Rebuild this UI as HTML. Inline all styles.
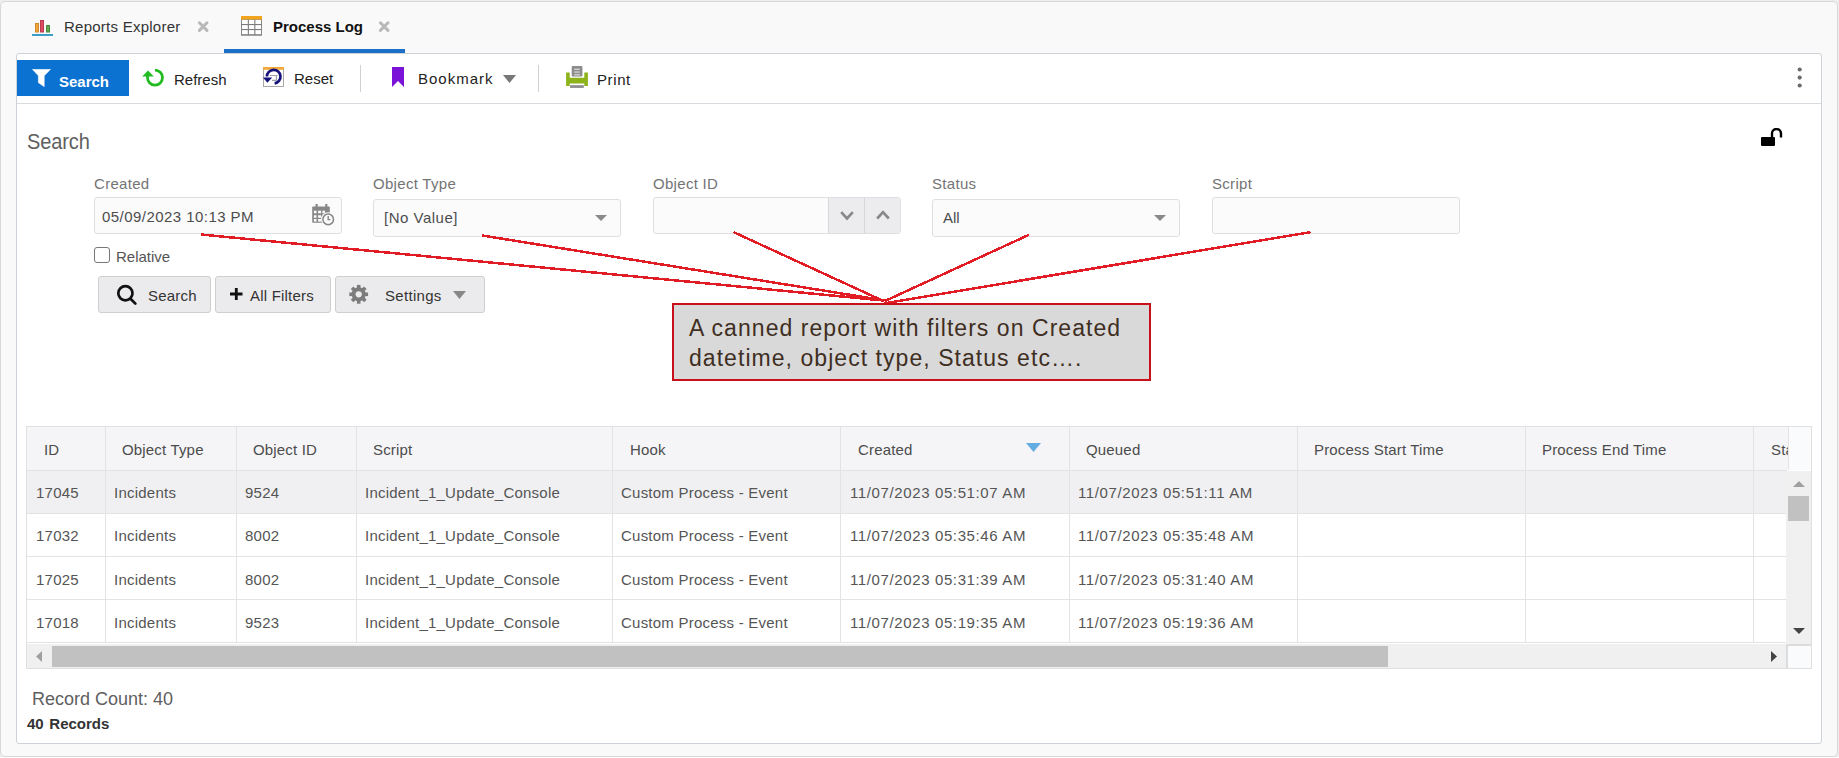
<!DOCTYPE html>
<html><head><meta charset="utf-8">
<style>
*{margin:0;padding:0;box-sizing:border-box}
html,body{width:1839px;height:758px;overflow:hidden;background:#eeeeee}
body{font-family:"Liberation Sans",sans-serif;position:relative;color:#333}
.a{position:absolute}
.t{position:absolute;white-space:nowrap;line-height:1}
#frame{left:0;top:1px;width:1838px;height:756px;border:1px solid #d8d8d8;border-radius:5px;background:#f9f9fa}
#panel{left:16px;top:53px;width:1806px;height:691px;border:1px solid #ccd2d8;border-radius:3px;background:#fff}
#tbline{left:17px;top:103px;width:1804px;height:1px;background:#d8dce0}
#tabline{left:224px;top:49px;width:181px;height:4px;background:#1a6fc6}
.sep{width:1px;background:#d0d0d0}
.lbl{color:#747474;font-size:15px;letter-spacing:0.3px}
.box{border:1px solid #dedfe2;border-radius:3px;background:#fbfbfc}
.btn{border:1px solid #cfcfcf;border-radius:3px;background:#ebebed}
.grid{background:#e3e3e3}
.cell{color:#555;font-size:15px;letter-spacing:0.23px}
.dt{letter-spacing:0.62px}
.hdr{color:#4c4c4c;font-size:15px;letter-spacing:0.17px}
</style></head>
<body>
<div class="a" id="frame"></div>
<div class="a" style="left:0;top:757px;width:1839px;height:1px;background:#fcfcfc"></div>

<!-- tabs -->
<svg class="a" style="left:32px;top:19px" width="22" height="18" viewBox="0 0 22 18">
  <rect x="3.5" y="4.5" width="3" height="8.5" fill="#f0a53a" stroke="#d08a2a" stroke-width="1"/>
  <rect x="8.5" y="1.5" width="3" height="11.5" fill="#e04a62" stroke="#b83a50" stroke-width="1"/>
  <rect x="14.5" y="6.5" width="3" height="6.5" fill="#62a852" stroke="#4a8a3c" stroke-width="1"/>
  <rect x="0" y="15" width="21" height="2" fill="#3d9fc8"/>
</svg>
<div class="t" style="left:64px;top:19px;font-size:15px;color:#333;letter-spacing:0.25px">Reports Explorer</div>
<svg class="a" style="left:196px;top:19px" width="15" height="15" viewBox="0 0 15 15"><path d="M3.4 3.8 L11 11.4 M11 3.8 L3.4 11.4" stroke="#b8b8b8" stroke-width="3" stroke-linecap="round"/></svg>

<svg class="a" style="left:241px;top:16px" width="22" height="20" viewBox="0 0 22 20">
  <rect x="0" y="0" width="21" height="19.7" fill="#7c7c7c"/>
  <rect x="0" y="0" width="21" height="3.6" fill="#f2a41e"/>
  <rect x="0.9" y="3.9" width="5.9" height="4.1" fill="#fff"/><rect x="0.9" y="9.1" width="5.9" height="3.9" fill="#fff"/><rect x="0.9" y="14.1" width="5.9" height="4.1" fill="#fff"/><rect x="7.9" y="3.9" width="5.4" height="4.1" fill="#fff"/><rect x="7.9" y="9.1" width="5.4" height="3.9" fill="#fff"/><rect x="7.9" y="14.1" width="5.4" height="4.1" fill="#fff"/><rect x="14.4" y="3.9" width="5.7" height="4.1" fill="#fff"/><rect x="14.4" y="9.1" width="5.7" height="3.9" fill="#fff"/><rect x="14.4" y="14.1" width="5.7" height="4.1" fill="#fff"/>
</svg>
<div class="t" style="left:273px;top:19px;font-size:15px;color:#111;font-weight:bold">Process Log</div>
<svg class="a" style="left:376.5px;top:19px" width="15" height="15" viewBox="0 0 15 15"><path d="M3.4 3.8 L11 11.4 M11 3.8 L3.4 11.4" stroke="#b8b8b8" stroke-width="3" stroke-linecap="round"/></svg>

<div class="a" id="panel"></div>
<div class="a" id="tabline"></div>
<div class="a" id="tbline"></div>

<!-- toolbar -->
<div class="a" style="left:17px;top:60px;width:112px;height:36px;background:#0b72d2"></div>
<svg class="a" style="left:32px;top:69px" width="19" height="18" viewBox="0 0 19 18">
  <path d="M0.3 0.2 H18.7 L12.3 6.8 V17.7 L6.3 13.7 V6.8 Z" fill="#fff" stroke="#fff" stroke-width="0.4" stroke-linejoin="round"/>
</svg>
<div class="t" style="left:59px;top:74px;font-size:15px;color:#fff;font-weight:bold">Search</div>

<svg class="a" style="left:138px;top:62px" width="30" height="30" viewBox="0 0 30 30">
  <path d="M17 8.1 A7.5 7.5 0 1 1 9.5 15.6 V13.8" fill="none" stroke="#22bb22" stroke-width="2.8"/>
  <path d="M4.2 14.6 L15.8 14.6 L10 8.4 Z" fill="#22bb22"/>
</svg>
<div class="t" style="left:174px;top:72px;font-size:15px;color:#222">Refresh</div>

<svg class="a" style="left:259px;top:62px" width="30" height="30" viewBox="0 0 30 30">
  <rect x="4.5" y="5.5" width="20" height="19" fill="#fff" stroke="#a8a8a8" stroke-width="1"/>
  <rect x="4" y="5" width="21" height="2.8" fill="#f2a93b"/>
  <path d="M10.7 13.5 H18.6 M17.4 13 V18.5 M13 18.3 H17.4" fill="none" stroke="#a0a0a8" stroke-width="1.2"/>
  <path d="M15.6 21.4 A6.8 6.8 0 1 0 7.9 14.6" fill="none" stroke="#15137a" stroke-width="2.7"/>
  <path d="M4 15.4 L13.2 15.4 L8.4 20.8 Z" fill="#15137a"/>
</svg>
<div class="t" style="left:294px;top:71px;font-size:15px;color:#222">Reset</div>

<div class="a sep" style="left:360px;top:65px;height:27px"></div>

<svg class="a" style="left:392px;top:67px" width="12" height="20" viewBox="0 0 12 20">
  <path d="M0 0 H12 V20 L6 14 L0 20 Z" fill="#7a12d8"/>
</svg>
<div class="t" style="left:418px;top:71px;font-size:15px;color:#222;letter-spacing:1px">Bookmark</div>
<svg class="a" style="left:503px;top:75px" width="13" height="8" viewBox="0 0 13 8"><path d="M0 0 H13 L6.5 8 Z" fill="#777"/></svg>

<div class="a sep" style="left:538px;top:65px;height:27px"></div>

<svg class="a" style="left:560px;top:62px" width="34" height="30" viewBox="0 0 34 30">
  <rect x="11.7" y="4" width="10.7" height="10.4" rx="1" fill="#8c8c8c"/>
  <rect x="14.3" y="6.7" width="5.5" height="1.1" fill="#e4e4e4"/><rect x="14.3" y="9.5" width="5.5" height="1.1" fill="#e4e4e4"/><rect x="14.3" y="12.3" width="5.5" height="1.1" fill="#e4e4e4"/>
  <path d="M6.1 10.5 H9.7 V15.8 H24.3 V10.5 H27.9 V24.1 H24.3 V21.6 H9.7 V24.1 H6.1 Z" fill="#8db31a"/>
  <rect x="10.1" y="23.2" width="13.7" height="2.7" fill="#8c8c8c"/>
</svg>
<div class="t" style="left:597px;top:72px;font-size:15px;color:#222;letter-spacing:0.6px">Print</div>

<svg class="a" style="left:1795px;top:65px" width="10" height="25" viewBox="0 0 10 25">
  <circle cx="4.7" cy="4.5" r="2.1" fill="#6a6a6a"/><circle cx="4.7" cy="12.6" r="2.1" fill="#6a6a6a"/><circle cx="4.7" cy="20.5" r="2.1" fill="#6a6a6a"/>
</svg>

<!-- search area -->
<div class="t" style="left:27px;top:130px;font-size:20px;color:#606060;letter-spacing:-0.1px;transform:scaleY(1.11);transform-origin:0 0">Search</div>
<svg class="a" style="left:1760px;top:128px" width="23" height="19" viewBox="0 0 23 19">
  <rect x="1" y="9" width="14" height="9" rx="1" fill="#000"/>
  <path d="M12 9.5 V5.5 A4.5 4.5 0 0 1 21 5.5 V9.5" fill="none" stroke="#000" stroke-width="2.4"/>
</svg>

<div class="t lbl" style="left:94px;top:176px">Created</div>
<div class="t lbl" style="left:373px;top:176px">Object Type</div>
<div class="t lbl" style="left:653px;top:176px">Object ID</div>
<div class="t lbl" style="left:932px;top:176px">Status</div>
<div class="t lbl" style="left:1212px;top:176px">Script</div>

<div class="a box" style="left:94px;top:197px;width:248px;height:37px"></div>
<div class="t" style="left:102px;top:209px;font-size:15px;color:#4d4d4d;letter-spacing:0.45px">05/09/2023 10:13 PM</div>
<svg class="a" style="left:312px;top:204px" width="24" height="23" viewBox="0 0 24 23">
  <rect x="0.2" y="2.6" width="17.6" height="16.2" rx="0.8" fill="#878787"/>
  <rect x="3.5" y="0" width="2.2" height="3.5" fill="#878787"/><rect x="13.2" y="0" width="2.2" height="3.5" fill="#878787"/>
  <g fill="#fbfbfc"><rect x="1.9" y="6.7" width="2.6" height="2.6"/><rect x="6.1" y="6.7" width="3" height="2.6"/><rect x="10.4" y="6.7" width="2.6" height="2.6"/><rect x="1.9" y="11.2" width="2.6" height="2.6"/><rect x="6.1" y="11.2" width="3" height="2.6"/><rect x="1.9" y="15" width="2.6" height="2.6"/><rect x="6.1" y="15" width="3" height="2.6"/></g>
  <circle cx="16.2" cy="15.4" r="7.2" fill="#fbfbfc"/>
  <circle cx="16.2" cy="15.4" r="5.3" fill="none" stroke="#878787" stroke-width="1.5"/>
  <path d="M16.2 12 V15.6 H18.4" fill="none" stroke="#878787" stroke-width="1.4"/>
</svg>

<div class="a box" style="left:373px;top:199px;width:248px;height:38px"></div>
<div class="t" style="left:384px;top:210px;font-size:15px;color:#4d4d4d;letter-spacing:0.5px">[No Value]</div>
<svg class="a" style="left:595px;top:215px" width="12" height="6" viewBox="0 0 12 6"><path d="M0 0 H12 L6 6 Z" fill="#8a8a8a"/></svg>

<div class="a box" style="left:653px;top:197px;width:248px;height:37px"></div>
<div class="a" style="left:828px;top:198px;width:72px;height:35px;background:#ececee;border-left:1px solid #d8d8da;border-radius:0 3px 3px 0"></div>
<div class="a" style="left:864px;top:198px;width:1px;height:35px;background:#d8d8da"></div>
<svg class="a" style="left:840px;top:211px" width="14" height="10" viewBox="0 0 14 10"><path d="M1.2 1.2 L7 7.5 L12.8 1.2" fill="none" stroke="#888" stroke-width="2.6"/></svg>
<svg class="a" style="left:876px;top:210px" width="14" height="10" viewBox="0 0 14 10"><path d="M1.2 8.5 L7 2.2 L12.8 8.5" fill="none" stroke="#888" stroke-width="2.6"/></svg>

<div class="a box" style="left:932px;top:199px;width:248px;height:38px"></div>
<div class="t" style="left:943px;top:210px;font-size:15px;color:#4d4d4d">All</div>
<svg class="a" style="left:1154px;top:215px" width="12" height="6" viewBox="0 0 12 6"><path d="M0 0 H12 L6 6 Z" fill="#8a8a8a"/></svg>

<div class="a box" style="left:1212px;top:197px;width:248px;height:37px"></div>

<div class="a" style="left:94px;top:247px;width:16px;height:16px;border:1.5px solid #777;border-radius:3px;background:#fff"></div>
<div class="t" style="left:116px;top:249px;font-size:15px;color:#555">Relative</div>

<div class="a btn" style="left:98px;top:276px;width:113px;height:37px"></div>
<svg class="a" style="left:112px;top:281px" width="30" height="30" viewBox="0 0 30 30">
  <circle cx="13.4" cy="12.3" r="7.1" fill="none" stroke="#111" stroke-width="2.7"/>
  <path d="M19 18.2 L23.4 22.6" stroke="#111" stroke-width="2.7" stroke-linecap="round"/>
</svg>
<div class="t" style="left:148px;top:288px;font-size:15px;color:#333;letter-spacing:0.2px">Search</div>

<div class="a btn" style="left:215px;top:276px;width:116px;height:37px"></div>
<svg class="a" style="left:230px;top:288px" width="13" height="12" viewBox="0 0 13 12"><path d="M6.3 0 V12 M0 6 H12.5" stroke="#111" stroke-width="2.8"/></svg>
<div class="t" style="left:250px;top:288px;font-size:15px;color:#333;letter-spacing:0.2px">All Filters</div>

<div class="a btn" style="left:335px;top:276px;width:150px;height:37px"></div>
<svg class="a" style="left:345px;top:280px" width="28" height="28" viewBox="0 0 28 28">
  <g transform="translate(13.7 14.3)" fill="#7c7c7c"><circle r="7"/><rect x="-1.8" y="-9.4" width="3.6" height="4" transform="rotate(0)"/><rect x="-1.8" y="-9.4" width="3.6" height="4" transform="rotate(45)"/><rect x="-1.8" y="-9.4" width="3.6" height="4" transform="rotate(90)"/><rect x="-1.8" y="-9.4" width="3.6" height="4" transform="rotate(135)"/><rect x="-1.8" y="-9.4" width="3.6" height="4" transform="rotate(180)"/><rect x="-1.8" y="-9.4" width="3.6" height="4" transform="rotate(225)"/><rect x="-1.8" y="-9.4" width="3.6" height="4" transform="rotate(270)"/><rect x="-1.8" y="-9.4" width="3.6" height="4" transform="rotate(315)"/></g>
  <circle cx="13.7" cy="14.3" r="3.1" fill="#ebebed"/>
</svg>
<div class="t" style="left:385px;top:288px;font-size:15px;color:#333;letter-spacing:0.3px">Settings</div>
<svg class="a" style="left:453px;top:291px" width="13" height="8" viewBox="0 0 13 8"><path d="M0 0 H13 L6.5 8 Z" fill="#888"/></svg>

<!-- table -->
<div class="a" id="tbl" style="left:26px;top:426px;width:1786px;height:243px;border:1px solid #e0e0e0;background:#fff"></div>
<div class="a" style="left:27px;top:427px;width:1761px;height:43px;background:#f5f5f7"></div>
<div class="a" style="left:1788px;top:427px;width:23px;height:43px;background:#fafbfc"></div>
<div class="a" style="left:27px;top:471px;width:1759px;height:42px;background:#f0f0f2"></div>
<!-- horizontal grid lines -->
<div class="a grid" style="left:27px;top:470px;width:1760px;height:1px"></div>
<div class="a grid" style="left:27px;top:513px;width:1759px;height:1px"></div>
<div class="a grid" style="left:27px;top:556px;width:1759px;height:1px"></div>
<div class="a grid" style="left:27px;top:599px;width:1759px;height:1px"></div>
<div class="a grid" style="left:27px;top:642px;width:1759px;height:1px"></div>
<!-- vertical grid lines -->
<div class="a grid" style="left:105px;top:427px;width:1px;height:216px"></div>
<div class="a grid" style="left:236px;top:427px;width:1px;height:216px"></div>
<div class="a grid" style="left:356px;top:427px;width:1px;height:216px"></div>
<div class="a grid" style="left:612px;top:427px;width:1px;height:216px"></div>
<div class="a grid" style="left:840px;top:427px;width:1px;height:216px"></div>
<div class="a grid" style="left:1069px;top:427px;width:1px;height:216px"></div>
<div class="a grid" style="left:1297px;top:427px;width:1px;height:216px"></div>
<div class="a grid" style="left:1525px;top:427px;width:1px;height:216px"></div>
<div class="a grid" style="left:1753px;top:427px;width:1px;height:216px"></div>
<div class="a grid" style="left:1788px;top:427px;width:1px;height:43px"></div>

<!-- header text -->
<div class="t hdr" style="left:44px;top:442px">ID</div>
<div class="t hdr" style="left:122px;top:442px">Object Type</div>
<div class="t hdr" style="left:253px;top:442px">Object ID</div>
<div class="t hdr" style="left:373px;top:442px">Script</div>
<div class="t hdr" style="left:630px;top:442px">Hook</div>
<div class="t hdr" style="left:858px;top:442px">Created</div>
<svg class="a" style="left:1026px;top:443px" width="15" height="9" viewBox="0 0 15 9"><path d="M0 0 H15 L7.5 9 Z" fill="#64ade2"/></svg>
<div class="t hdr" style="left:1086px;top:442px">Queued</div>
<div class="t hdr" style="left:1314px;top:442px">Process Start Time</div>
<div class="t hdr" style="left:1542px;top:442px">Process End Time</div>
<div class="a" style="left:1754px;top:427px;width:34px;height:43px;overflow:hidden"><div class="t hdr" style="left:17px;top:15px">Status</div></div>

<!-- rows -->
<div class="t cell" style="left:36px;top:485px">17045</div>
<div class="t cell" style="left:114px;top:485px">Incidents</div>
<div class="t cell" style="left:245px;top:485px">9524</div>
<div class="t cell" style="left:365px;top:485px">Incident_1_Update_Console</div>
<div class="t cell" style="left:621px;top:485px">Custom Process - Event</div>
<div class="t cell dt" style="left:850px;top:485px">11/07/2023 05:51:07 AM</div>
<div class="t cell dt" style="left:1078px;top:485px">11/07/2023 05:51:11 AM</div>
<div class="t cell" style="left:36px;top:528px">17032</div>
<div class="t cell" style="left:114px;top:528px">Incidents</div>
<div class="t cell" style="left:245px;top:528px">8002</div>
<div class="t cell" style="left:365px;top:528px">Incident_1_Update_Console</div>
<div class="t cell" style="left:621px;top:528px">Custom Process - Event</div>
<div class="t cell dt" style="left:850px;top:528px">11/07/2023 05:35:46 AM</div>
<div class="t cell dt" style="left:1078px;top:528px">11/07/2023 05:35:48 AM</div>
<div class="t cell" style="left:36px;top:572px">17025</div>
<div class="t cell" style="left:114px;top:572px">Incidents</div>
<div class="t cell" style="left:245px;top:572px">8002</div>
<div class="t cell" style="left:365px;top:572px">Incident_1_Update_Console</div>
<div class="t cell" style="left:621px;top:572px">Custom Process - Event</div>
<div class="t cell dt" style="left:850px;top:572px">11/07/2023 05:31:39 AM</div>
<div class="t cell dt" style="left:1078px;top:572px">11/07/2023 05:31:40 AM</div>
<div class="t cell" style="left:36px;top:615px">17018</div>
<div class="t cell" style="left:114px;top:615px">Incidents</div>
<div class="t cell" style="left:245px;top:615px">9523</div>
<div class="t cell" style="left:365px;top:615px">Incident_1_Update_Console</div>
<div class="t cell" style="left:621px;top:615px">Custom Process - Event</div>
<div class="t cell dt" style="left:850px;top:615px">11/07/2023 05:19:35 AM</div>
<div class="t cell dt" style="left:1078px;top:615px">11/07/2023 05:19:36 AM</div>

<!-- scrollbars -->
<div class="a" style="left:1786px;top:471px;width:25px;height:173px;background:#f0f0f0"></div>
<svg class="a" style="left:1793px;top:481px" width="12" height="6" viewBox="0 0 12 6"><path d="M0 6 H12 L6 0 Z" fill="#a0a0a0"/></svg>
<div class="a" style="left:1788px;top:496px;width:21px;height:25px;background:#c1c1c1"></div>
<svg class="a" style="left:1793px;top:628px" width="12" height="6" viewBox="0 0 12 6"><path d="M0 0 H12 L6 6 Z" fill="#444"/></svg>

<div class="a" style="left:27px;top:644px;width:1759px;height:24px;background:#f0f0f0"></div>
<svg class="a" style="left:36px;top:651px" width="6" height="11" viewBox="0 0 6 11"><path d="M6 0 V11 L0 5.5 Z" fill="#a0a0a0"/></svg>
<div class="a" style="left:52px;top:646px;width:1336px;height:21px;background:#c1c1c1"></div>
<svg class="a" style="left:1771px;top:651px" width="6" height="11" viewBox="0 0 6 11"><path d="M0 0 V11 L6 5.5 Z" fill="#444"/></svg>
<div class="a" style="left:1786px;top:644px;width:25px;height:24px;background:#fafbfc;border-left:2px solid #dcdcdc;border-top:2px solid #dcdcdc"></div>

<!-- footer -->
<div class="t" style="left:32px;top:690px;font-size:18px;color:#606060">Record Count: 40</div>
<div class="t" style="left:27px;top:716px;font-size:15px;color:#333;font-weight:bold;word-spacing:1.5px">40 Records</div>

<!-- annotation -->
<svg class="a" style="left:0;top:0" width="1839" height="758" viewBox="0 0 1839 758">
  <g stroke="#e11c25" stroke-width="2.5" fill="none" shape-rendering="crispEdges">
    <path d="M201 234.5 L884.5 300.6"/>
    <path d="M482.3 235.5 L884.5 300.4"/>
    <path d="M733.3 232 L884.5 301.5"/>
    <path d="M1029 234.8 L884.5 301.2"/>
    <path d="M1310.5 232.2 L884.5 303.3"/>
  </g>
</svg>
<div class="a" style="left:672px;top:303px;width:479px;height:78px;background:#d9d9d9;border:2px solid #c8101a"></div>
<div class="t" style="left:689px;top:313px;font-size:23px;color:#3f2e22;line-height:30px;letter-spacing:1.05px">A canned report with filters on Created<br>datetime, object type, Status etc….</div>

</body></html>
